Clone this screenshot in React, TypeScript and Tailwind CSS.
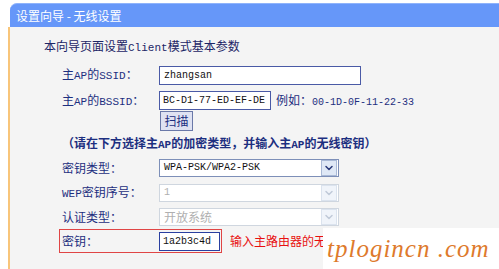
import { ChevronDown } from "lucide-react";

const cjk = "font-['Noto_Sans_CJK_SC',sans-serif]";
const mono = "font-['Liberation_Mono','Noto_Sans_CJK_SC',monospace]";

function Latin({ children }: { children: string }) {
  return <span className={`${mono} text-[11px]`}>{children}</span>;
}

function Row({
  label,
  className = "",
  children,
}: {
  label?: React.ReactNode;
  className?: string;
  children?: React.ReactNode;
}) {
  return (
    <div className={`flex items-center ${className}`}>
      <div className="w-[97px] shrink-0 text-[#1d2f80] text-[12px] leading-none whitespace-nowrap">
        {label}
      </div>
      {children}
    </div>
  );
}

function Select({ value, disabled, latin }: { value: string; disabled?: boolean; latin?: boolean }) {
  return (
    <div
      className={`flex items-center w-[180px] h-[18px] border bg-white ${
        disabled ? "border-[#cfd6df]" : "border-[#7d8fb8]"
      }`}
    >
      <span
        className={`flex-1 pl-[4px] leading-none whitespace-nowrap ${
          latin ? `${mono} text-[10px]` : "text-[12px]"
        } ${disabled ? "text-[#b0b0b0]" : "text-[#111]"}`}
      >
        {value}
      </span>
      <span
        className={`flex items-center justify-center w-[16px] h-[16px] mr-[1px] border ${
          disabled
            ? "bg-[#f0f4fa] border-[#dbe3ee] text-[#c0cad8]"
            : "bg-[#dfe8f6] border-[#a9b9d6] text-[#2a3a7a]"
        }`}
      >
        <ChevronDown size={12} strokeWidth={3} />
      </span>
    </div>
  );
}

export default function App() {
  return (
    <div className={`relative w-[499px] h-[269px] overflow-hidden bg-white ${cjk}`}>
      {/* Title bar */}
      <div className="ml-[10px] mt-[3px] h-[24px] rounded-tl-[7px] bg-[#6697f9] border-t border-[#8fb3fb] flex items-center pl-[6px] text-white text-[12px]">
        设置向导 - 无线设置
      </div>

      {/* Content */}
      <div className="ml-[8px] h-[242px] border-l-2 border-[#f8c57a] bg-[#f4f4f4]">
        <div className="pl-[34px] pt-[9px] h-[29px]">
          <div className="h-[20px] leading-[20px] text-[12px] text-[#1c2566] whitespace-nowrap">
            本向导页面设置<Latin>Client</Latin>模式基本参数
          </div>
        </div>

        <div className="pl-[52px]">
          <Row label={<>主<Latin>AP</Latin>的<Latin>SSID</Latin>：</>} className="mt-[9px] h-[20px]">
            <div className={`w-[202px] h-[19px] border border-[#4a5aa6] bg-white pl-[4px] flex items-center ${mono} text-[10px] text-[#111]`}>
              zhangsan
            </div>
          </Row>

          <Row label={<>主<Latin>AP</Latin>的<Latin>BSSID</Latin>：</>} className="mt-[5px] h-[21px]">
            <div className={`w-[112px] h-[19px] border border-[#4a5aa6] bg-white pl-[3px] flex items-center whitespace-nowrap ${mono} text-[10px] text-[#111]`}>
              BC-D1-77-ED-EF-DE
            </div>
            <span className="ml-[5px] text-[12px] text-[#1d2f80] whitespace-nowrap">
              例如：<span className={`${mono} text-[10px]`}>00-1D-0F-11-22-33</span>
            </span>
          </Row>

          <Row className="h-[21px] items-start">
            <button className="ml-[1px] w-[33px] h-[20px] border border-[#6a78a8] bg-[#dfe2f2] text-[12px] text-[#1d2f80] leading-none">
              扫描
            </button>
          </Row>

          <div className="h-[22px] leading-[22px] text-[12px] font-bold text-[#1d2f80] whitespace-nowrap">
            （请在下方选择主<Latin>AP</Latin>的加密类型，并输入主<Latin>AP</Latin>的无线密钥）
          </div>

          <Row label="密钥类型：" className="mt-[4px] h-[20px]">
            <Select value="WPA-PSK/WPA2-PSK" latin />
          </Row>

          <Row label={<><Latin>WEP</Latin>密钥序号：</>} className="mt-[5px] h-[20px]">
            <Select value="1" disabled latin />
          </Row>

          <Row label="认证类型：" className="mt-[4px] h-[20px]">
            <Select value="开放系统" disabled />
          </Row>

          <div className="mt-[2px] flex items-center">
            <div className="-ml-[3px] h-[24px] w-[163px] border border-[#e04545] pl-[2px] pr-[1px] flex items-center">
              <div className="w-[97px] shrink-0 text-[12px] text-[#1d2f80] leading-none">密钥：</div>
              <div className={`w-[61px] h-[19px] border border-[#2a3fa0] bg-white pl-[3px] flex items-center ${mono} text-[10px] text-[#111]`}>
                1a2b3c4d
              </div>
            </div>
            <span className="ml-[8px] w-[93px] overflow-hidden whitespace-nowrap text-[12px] text-[#e81010]">
              输入主路由器的无线密钥
            </span>
          </div>
        </div>
      </div>

      {/* Watermark */}
      <div className="absolute left-[323px] top-[228px] w-[176px] h-[41px] bg-white flex items-center pl-[4px]">
        <span className="font-['Liberation_Serif',serif] italic text-[25px] text-[#de7a2c] tracking-[1px] whitespace-nowrap">
          tplogincn .com
        </span>
      </div>
    </div>
  );
}
